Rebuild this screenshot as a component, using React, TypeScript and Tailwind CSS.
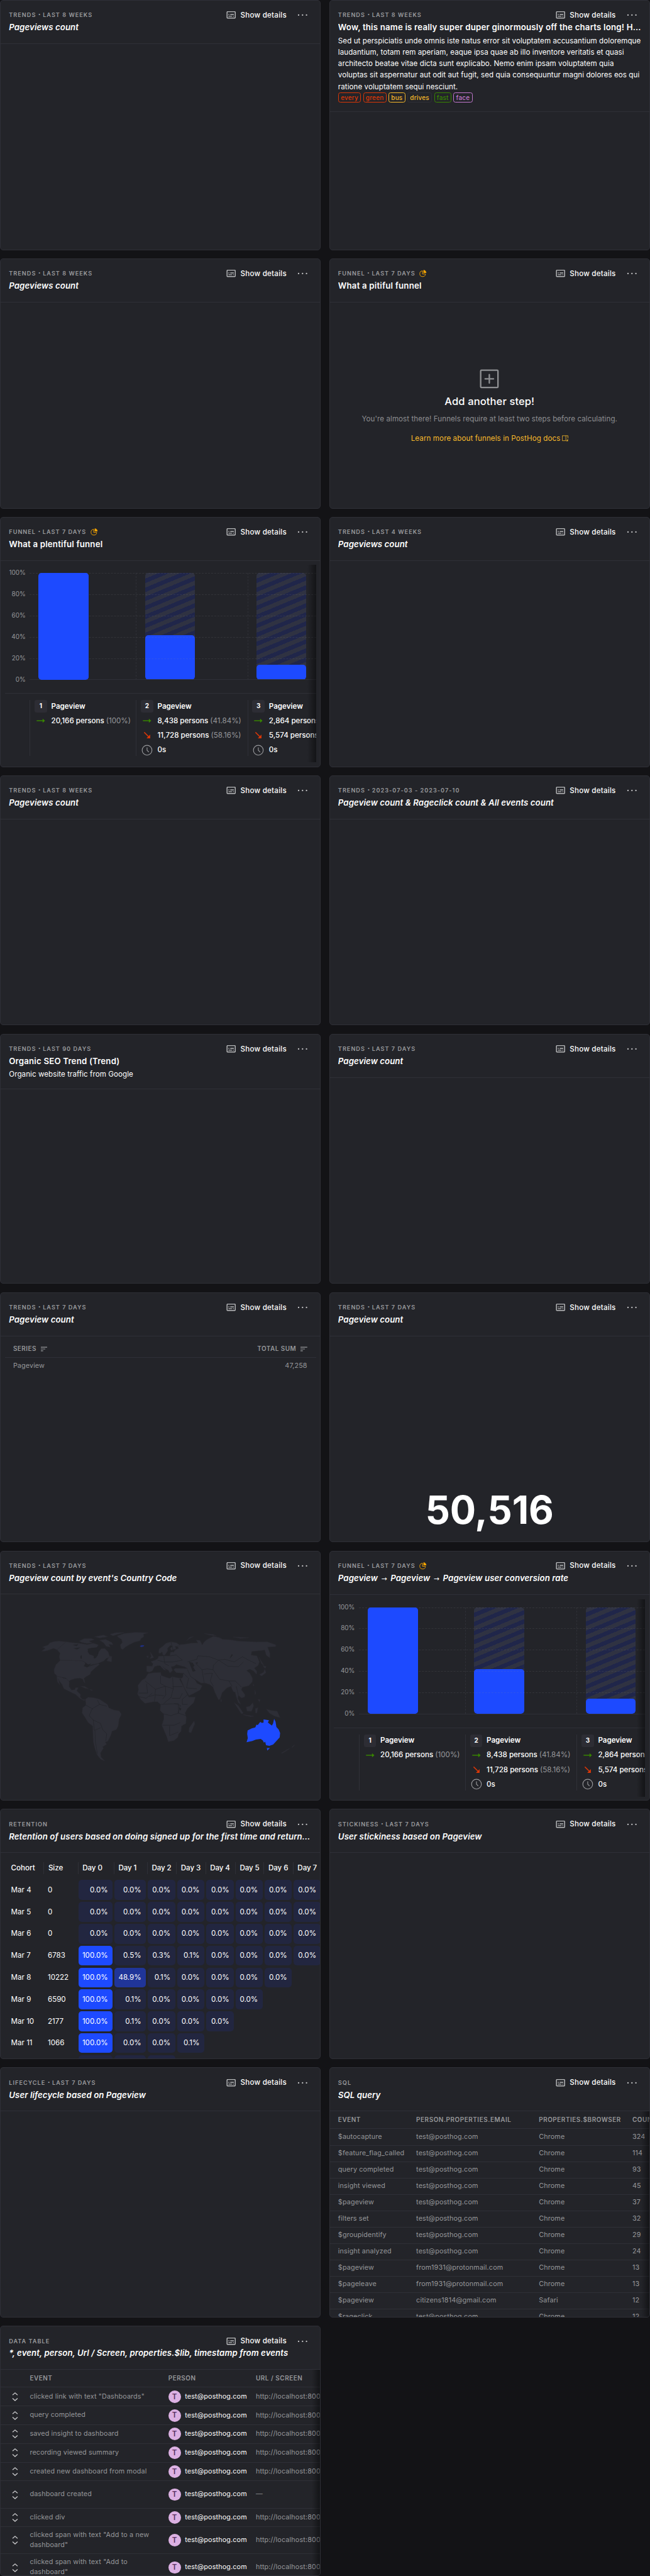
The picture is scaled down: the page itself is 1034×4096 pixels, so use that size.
import React from 'react'

type CardProps = {
  kind: string
  period?: string
  title: React.ReactNode
  italic?: boolean
  sampled?: boolean
  description?: string
  tags?: boolean
  children?: React.ReactNode
}

function DetailsIcon() {
  return (
    <svg className="size-[21px] shrink-0 text-[#b9babc]" viewBox="0 0 24 24" fill="currentColor">
      <path d="M20 4H4c-1.1 0-2 .9-2 2v12c0 1.1.9 2 2 2h16c1.1 0 2-.9 2-2V6c0-1.1-.9-2-2-2zm0 14H4V6h16v12zM6 10h2v2H6zm0 4h8v2H6zm10 0h2v2h-2zm-6-4h8v2h-8z" />
    </svg>
  )
}

function DotsIcon() {
  return (
    <svg className="h-6 w-5 shrink-0 text-[#c8c8ca]" viewBox="0 0 20 24" fill="currentColor">
      <circle cx="2.4" cy="12" r="1.4" />
      <circle cx="10" cy="12" r="1.4" />
      <circle cx="17.6" cy="12" r="1.4" />
    </svg>
  )
}

function PieIcon() {
  return (
    <svg className="size-3.5 shrink-0 text-[#f7a501]" viewBox="0 0 15 15" fill="none">
      <path d="M6.6 2.2A5.9 5.9 0 1 0 12.8 8.6H6.6Z" stroke="currentColor" strokeWidth="1.2" />
      <path d="M8.6 0.4a6 6 0 0 1 6 6h-6Z" fill="currentColor" />
    </svg>
  )
}

const TAGS: [string, string][] = [
  ['every', 'border-[#db3707] text-[#db3707]'],
  ['green', 'border-[#db3707] text-[#db3707]'],
  ['bus', 'border-[#f7b92b] text-[#f7b92b]'],
  ['drives', 'border-[#2f3037] text-[#f7b92b]'],
  ['fast', 'border-[#388600] text-[#388600]'],
  ['face', 'border-[#c278cf] text-[#c278cf]'],
]

function Card({ kind, period, title, italic = true, sampled, description, tags, children }: CardProps) {
  return (
    <section className="relative flex h-[480px] min-w-0 flex-col overflow-hidden rounded-md border border-[#2f3037] bg-[#232429]">
      <header className="shrink-0 border-b border-[#2f3037] px-4 pt-4 pb-4">
        <div className="flex h-6 items-center">
          <h5 className="flex items-center text-[11px] font-semibold tracking-[1.25px] whitespace-nowrap text-[#9a9b9e] uppercase">
            <span>{kind}</span>
            {period && <span className="w-[13px] text-center text-[8px] tracking-normal">•</span>}
            {period && <span>{period}</span>}
            {sampled && (
              <span className="ml-2">
                <PieIcon />
              </span>
            )}
          </h5>
          <div className="ml-auto flex items-center pr-2">
            <DetailsIcon />
            <span className="ml-[7px] w-[89px] text-sm font-medium tracking-[0.28px] whitespace-nowrap">Show details</span>
            <span className="ml-5">
              <DotsIcon />
            </span>
          </div>
        </div>
        <h4
          className={
            italic
              ? 'mb-0.5 truncate text-base leading-6 font-semibold tracking-[0.08px] italic'
              : 'mb-0.5 truncate text-base leading-6 font-semibold tracking-[0.22px]'
          }
        >
          {title}
        </h4>
        {description && <p className="text-sm leading-[22px] tracking-[0.08px]">{description}</p>}
        {tags && (
          <div className="flex gap-1">
            {TAGS.map(([name, tone]) => (
              <span key={name} className={`flex h-5 items-center rounded border px-1 text-xs font-medium tracking-[0.25px] ${tone}`}>
                {name}
              </span>
            ))}
          </div>
        )}
      </header>
      <div className="relative min-h-0 flex-1 overflow-hidden">{children}</div>
    </section>
  )
}

function EdgeShade() {
  return <div className="pointer-events-none absolute inset-y-0 right-0 w-4 bg-linear-to-r from-transparent to-black/45" />
}

function GreenArrow() {
  return (
    <svg className="h-6 w-6 shrink-0 text-[#388600]" viewBox="0 0 24 24">
      <path d="M4 12h12" stroke="currentColor" strokeWidth="1.8" />
      <path d="M15.5 8l4.5 4-4.5 4z" fill="currentColor" />
    </svg>
  )
}

function RedArrow() {
  return (
    <svg className="h-6 w-6 shrink-0 text-[#db3707]" viewBox="0 0 24 24">
      <path d="M6.5 6.5l9 9" stroke="currentColor" strokeWidth="1.8" />
      <path d="M18 11v7h-7z" fill="currentColor" />
    </svg>
  )
}

function ClockIcon() {
  return (
    <svg className="h-6 w-6 shrink-0 text-[#97989b]" viewBox="0 0 24 24" fill="none" stroke="currentColor" strokeWidth="1.4">
      <circle cx="12" cy="12" r="9.4" />
      <path d="M12 6.5V12l3.4 3.6" />
    </svg>
  )
}

const STEPS = [
  { n: '1', fill: 100, width: 'w-[204px]', pass: '20,166', passPct: '(100%)' },
  { n: '2', fill: 41.84, width: 'w-[214px]', pass: '8,438', passPct: '(41.84%)', drop: '11,728', dropPct: '(58.16%)' },
  { n: '3', fill: 14.2, width: 'w-[214px]', pass: '2,864', passPct: '(14.2%)', drop: '5,574', dropPct: '(27.64%)' },
]

function Funnel() {
  return (
    <div className="relative m-2 h-[379px] overflow-hidden">
      <div className="flex h-[247px] border-b border-[#2f3037] pt-[15px]">
        <div className="flex h-[205px] w-12 shrink-0 flex-col justify-between pr-2 text-right text-xs leading-none text-[#97989b]">
          {['100%', '80%', '60%', '40%', '20%', '0%'].map((t) => (
            <span key={t} className="flex h-0 items-center justify-end">
              {t}
            </span>
          ))}
        </div>
        <div className="relative h-[206px] w-[640px] shrink-0">
          <div className="flex h-[205px]">
            {STEPS.map((s, i) => (
              <div key={s.n} className={`${s.width} shrink-0 ${i > 0 ? 'border-l border-dashed border-[#2f3037]' : 'border-l border-transparent'} pl-4`}>
                <div className="flex h-full w-24 flex-col justify-end overflow-hidden rounded-md bg-[repeating-linear-gradient(-22.5deg,#20264a_0_8px,#2f3242_8px_16px)]">
                  <div className="rounded-md bg-[#1d4aff]" style={{ height: `${s.fill}%` }} />
                </div>
              </div>
            ))}
          </div>
          <div className="pointer-events-none absolute inset-0 flex flex-col justify-between">
            {[0, 1, 2, 3, 4].map((i) => (
              <div key={i} className="border-t border-dashed border-[#8a8c94]/15" />
            ))}
            <div className="border-t border-[#2f3037]" />
          </div>
          <div className="absolute top-0 left-[17px] h-[205px] w-24 rounded-md bg-[#1d4aff]" />
        </div>
      </div>
      <div className="mt-3 ml-12 flex h-[108px]">
        {STEPS.map((s) => (
          <div key={s.n} className={`${s.width} flex shrink-0 flex-col gap-1 border-l border-[#2f3037] pl-2 text-sm whitespace-nowrap`}>
            <div className="flex h-6 items-center gap-2">
              <span className="flex size-6 items-center justify-center rounded bg-[#2d2d34] text-xs font-bold">{s.n}</span>
              <span className="font-semibold">Pageview</span>
            </div>
            <div className="flex h-6 items-center gap-2">
              <GreenArrow />
              <span className="font-medium">
                {s.pass} persons <span className="font-normal text-[#97989b]">{s.passPct}</span>
              </span>
            </div>
            {s.drop && (
              <>
                <div className="flex h-6 items-center gap-2">
                  <RedArrow />
                  <span className="font-medium">
                    {s.drop} persons <span className="font-normal text-[#97989b]">{s.dropPct}</span>
                  </span>
                </div>
                <div className="flex h-6 items-center gap-2">
                  <ClockIcon />
                  <span className="font-medium">0s</span>
                </div>
              </>
            )}
          </div>
        ))}
      </div>
      <EdgeShade />
    </div>
  )
}

function AddStep() {
  return (
    <div className="flex flex-col items-center pt-[126px]">
      <svg className="h-[42px] w-[42px] text-[#8f9093]" viewBox="0 0 42 42" fill="none" stroke="currentColor" strokeWidth="2.8">
        <rect x="4.4" y="4.4" width="33.2" height="33.2" rx="1.5" />
        <path d="M21 13v16M13 21h16" strokeLinecap="round" />
      </svg>
      <h2 className="mt-[9px] text-xl leading-7 font-medium tracking-[0.1px]">Add another step!</h2>
      <p className="mt-2 text-sm leading-[22px] tracking-[0.08px] text-[#8c8d90]">
        You're almost there! Funnels require at least two steps before calculating.
      </p>
      <p className="mt-[15px] flex items-center text-sm leading-[22px] tracking-[0.12px] text-[#f7b92b]">
        Learn more about funnels in PostHog docs
        <svg className="ml-[3px] size-3" viewBox="0 0 12 12" fill="none" stroke="currentColor">
          <path d="M7.5 10.5H0.5V1h11v5M7.5 1v9.5" />
          <path d="M11.5 7v4.5H8z" fill="currentColor" stroke="none" />
        </svg>
      </p>
    </div>
  )
}

function SortIcon() {
  return (
    <svg className="h-3 w-[13px]" viewBox="0 0 13 12" stroke="currentColor" strokeWidth="1.4">
      <path d="M0 2.5h13M0 6h8.5M0 9.5h4.5" />
    </svg>
  )
}

function SeriesTable() {
  return (
    <div className="m-2 text-[13px] text-[#97989b]">
      <div className="flex h-[34px] items-center justify-between border-b border-[#2f3037] pr-[17px] pl-4 text-xs font-semibold tracking-[0.6px]">
        <span className="flex items-center gap-2">
          SERIES <SortIcon />
        </span>
        <span className="flex items-center gap-2">
          TOTAL SUM <SortIcon />
        </span>
      </div>
      <div className="flex h-[31px] items-center justify-between pr-[17px] pl-4 tracking-[0.15px]">
        <span>Pageview</span>
        <span>47,258</span>
      </div>
    </div>
  )
}

const RET_COLS = 'grid grid-cols-[65.5px_65.5px_69px_64px_56px_56px_57px_55px_56px_56px]'
const RET_ROWS: [string, string, string[]][] = [
  ['Mar 4', '0', ['0.0%', '0.0%', '0.0%', '0.0%', '0.0%', '0.0%', '0.0%', '0.0%']],
  ['Mar 5', '0', ['0.0%', '0.0%', '0.0%', '0.0%', '0.0%', '0.0%', '0.0%', '0.0%']],
  ['Mar 6', '0', ['0.0%', '0.0%', '0.0%', '0.0%', '0.0%', '0.0%', '0.0%', '0.0%']],
  ['Mar 7', '6783', ['100.0%', '0.5%', '0.3%', '0.1%', '0.0%', '0.0%', '0.0%', '0.0%']],
  ['Mar 8', '10222', ['100.0%', '48.9%', '0.1%', '0.0%', '0.0%', '0.0%', '0.0%']],
  ['Mar 9', '6590', ['100.0%', '0.1%', '0.0%', '0.0%', '0.0%', '0.0%']],
  ['Mar 10', '2177', ['100.0%', '0.1%', '0.0%', '0.0%', '0.0%']],
  ['Mar 11', '1066', ['100.0%', '0.0%', '0.0%', '0.1%']],
  ['', '', ['', '', '']],
]

function cellTone(v: string) {
  if (v === '100.0%') return 'bg-[#1d4aff]'
  if (v === '48.9%') return 'bg-[#203599]'
  return 'bg-[#222640]'
}

function Retention() {
  return (
    <div className="w-[620px] pl-[17px] text-sm">
      <div className={`${RET_COLS} mt-[18px] mb-2.5 h-[22px]`}>
        {['Cohort', 'Size', 'Day 0', 'Day 1', 'Day 2', 'Day 3', 'Day 4', 'Day 5', 'Day 6', 'Day 7'].map((h, i) => (
          <span
            key={h}
            className={
              i === 0 ? 'pl-[3px] leading-[22px] font-medium' : 'border-l border-[#2f3037] pl-2 leading-[22px] font-medium tracking-[-0.1px] whitespace-nowrap'
            }
          >
            {h}
          </span>
        ))}
      </div>
      {RET_ROWS.map(([day, size, cells], r) => (
        <div key={r} className={`${RET_COLS} h-[42px] items-center`}>
          <span className="pl-[3px]">{day}</span>
          <span className="pl-2">{size}</span>
          {cells.map((c, i) => (
            <span key={i} className={`${cellTone(c)} mx-0.5 flex h-[38px] items-center justify-end rounded-md pr-[9px]`}>
              {c}
            </span>
          ))}
        </div>
      ))}
    </div>
  )
}

const SQL_ROWS: [string, string, string, string][] = [
  ['$autocapture', 'test@posthog.com', 'Chrome', '324'],
  ['$feature_flag_called', 'test@posthog.com', 'Chrome', '114'],
  ['query completed', 'test@posthog.com', 'Chrome', '93'],
  ['insight viewed', 'test@posthog.com', 'Chrome', '45'],
  ['$pageview', 'test@posthog.com', 'Chrome', '37'],
  ['filters set', 'test@posthog.com', 'Chrome', '32'],
  ['$groupidentify', 'test@posthog.com', 'Chrome', '29'],
  ['insight analyzed', 'test@posthog.com', 'Chrome', '24'],
  ['$pageview', 'from1931@protonmail.com', 'Chrome', '13'],
  ['$pageleave', 'from1931@protonmail.com', 'Chrome', '13'],
  ['$pageview', 'citizens1814@gmail.com', 'Safari', '12'],
  ['$rageclick', 'test@posthog.com', 'Chrome', '12'],
]

function SqlTable() {
  const cols = 'grid grid-cols-[150px_235.5px_179.5px_100px] items-center pl-4 border-b border-[#2f3037]'
  return (
    <div className="h-full w-full overflow-hidden">
      <div className="w-[690px] text-[13px] tracking-[0.18px] text-[#97989b]">
        <div className={`${cols} h-[34px] text-xs font-semibold tracking-[0.65px]`}>
          <span>EVENT</span>
          <span>PERSON.PROPERTIES.EMAIL</span>
          <span>PROPERTIES.$BROWSER</span>
          <span>COUNT()</span>
        </div>
        {SQL_ROWS.map((r, i) => (
          <div key={i} className={`${cols} h-[31.45px]`}>
            {r.map((c, j) => (
              <span key={j}>{c}</span>
            ))}
          </div>
        ))}
      </div>
      <EdgeShade />
    </div>
  )
}

const EVENTS: [string, string, string][] = [
  ['clicked link with text "Dashboards"', 'http://localhost:8000/', 'h-9'],
  ['query completed', 'http://localhost:8000/', 'h-9'],
  ['saved insight to dashboard', 'http://localhost:8000/', 'h-9'],
  ['recording viewed summary', 'http://localhost:8000/', 'h-9'],
  ['created new dashboard from modal', 'http://localhost:8000/', 'h-9'],
  ['dashboard created', '—', 'h-[52px]'],
  ['clicked div', 'http://localhost:8000/', 'h-9'],
  ['clicked span with text "Add to a new dashboard"', 'http://localhost:8000/', 'h-[52px]'],
  ['clicked span with text "Add to dashboard"', 'http://localhost:8000/', 'h-[52px]'],
]

function DataTable() {
  const cols = 'grid grid-cols-[56px_266px_168px_200px] items-center border-b border-[#2f3037]'
  return (
    <div className="h-full w-full overflow-hidden">
      <div className="w-[690px] text-[13px] tracking-[0.18px] text-[#97989b]">
        <div className={`${cols} h-[34px] text-xs font-semibold tracking-[0.65px]`}>
          <span />
          <span>EVENT</span>
          <span>PERSON</span>
          <span>URL / SCREEN</span>
        </div>
        {EVENTS.map(([event, url, h], i) => (
          <div key={i} className={`${cols} ${h}`}>
            <svg className="ml-4 size-6 text-[#c8c8ca]" viewBox="0 0 24 24" fill="none" stroke="currentColor" strokeWidth="1.6">
              <path d="M7.2 8.8L12 4.6l4.8 4.2M7.2 15.2l4.8 4.2 4.8-4.2" />
            </svg>
            <span className="w-[240px] leading-5">{event}</span>
            <span className="flex items-center gap-2 text-white">
              <span className="flex size-6 items-center justify-center rounded-full bg-[#dcb1e3] text-sm font-semibold text-[#572e5e]">T</span>
              test@posthog.com
            </span>
            <span>{url}</span>
          </div>
        ))}
      </div>
      <EdgeShade />
    </div>
  )
}

const LAND = [
  'M565 540L600 526L655 519L715 522L692 530L694 545L680 556L676 568L650 576L625 590L605 605L592 619L583 612L580 592L590 578L586 560L570 548Z',
  'M200 628L218 612L204 605L232 592L240 580L262 572L285 570L318 574L275 620L258 612L235 622L215 628Z',
  'M318 574L350 579L385 583L420 590L450 582L475 592L468 605L440 612L422 630L430 642L455 652L455 670L470 655L475 635L488 614L505 612L522 632L528 655L537 662L512 670L500 685L470 700L445 705L430 712L415 695L395 683L290 682L285 660L290 640L275 620Z',
  'M290 682L395 683L412 695L405 715L420 720L450 708L475 700L480 705L462 722L450 735L438 748L435 762L415 775L405 785L410 812L404 806L400 790L385 783L360 787L340 795L332 802L318 785L300 780L275 772L262 755L260 735L270 705Z',
  'M273 772L300 780L318 785L334 803L333 832L345 852L360 850L365 838L378 838L370 857L388 877L387 892L397 906L412 908L405 914L385 900L365 878L325 855L308 845L300 822L288 803L281 788L288 822L277 805Z',
  'M382 570L405 556L440 555L455 562L430 570L445 580L420 584L395 578ZM455 545L500 535L520 545L480 552ZM480 565L510 560L540 578L545 592L525 588L532 605L512 600L500 580ZM530 530L560 521L600 520L570 530L545 540Z',
  'M388 830L408 830L428 846L412 842ZM432 848L448 852L440 856ZM528 655L540 658L538 690L515 684Z',
  'M412 905L425 894L450 896L480 905L505 925L518 935L525 955L550 967L575 972L586 992L575 1020L570 1060L562 1080L540 1090L535 1112L520 1148L508 1152L514 1165L495 1180L499 1188L485 1215L487 1238L506 1262L485 1252L468 1225L458 1190L450 1150L447 1060L425 1040L410 1010L396 985L398 955L414 940Z',
  'M715 757L740 752L775 750L778 768L800 778L820 785L830 775L860 782L875 783L866 790L885 830L905 880L912 893L943 893L935 925L905 958L893 985L899 1010L897 1045L876 1060L874 1090L862 1105L858 1125L840 1143L812 1150L804 1120L795 1095L781 1055L790 1020L790 990L772 970L775 935L760 920L740 920L700 929L680 908L663 875L668 850L665 825L685 795L700 785Z',
  'M937 1030L940 1047L922 1099L911 1095L913 1070L925 1050Z',
  'M765 637L768 615L785 600L800 583L825 574L852 580L870 595L862 603L845 600L850 615L826 624L822 612L832 600L822 595L808 612L810 625L795 652L786 650L782 632L772 642Z',
  'M707 713L735 714L738 700L728 688L748 680L762 670L765 657L785 655L820 655L822 635L838 632L848 618L862 612L855 600L870 590L890 588L920 582L955 580L947 564L965 566L976 592L985 575L1000 560L1030 542L1060 550L1075 560L1110 562L1150 570L1190 572L1240 575L1290 574L1332 592L1330 602L1292 605L1303 640L1302 666L1285 652L1278 622L1255 625L1215 630L1212 650L1240 655L1252 690L1245 712L1228 725L1240 745L1238 762L1224 742L1205 732L1190 740L1206 755L1219 785L1218 805L1200 828L1170 836L1165 850L1183 880L1180 893L1165 898L1150 882L1148 900L1162 935L1150 925L1140 890L1135 865L1125 860L1115 830L1095 840L1072 868L1062 905L1054 908L1035 860L1028 835L1012 820L990 812L970 812L940 790L950 812L976 828L965 852L935 872L912 885L890 840L872 788L882 778L885 755L850 752L838 735L845 727L905 728L890 718L870 712L850 704L842 714L826 718L833 740L820 754L812 738L795 728L785 716L802 740L790 735L772 712L760 712L745 718L735 742L720 750L707 745Z',
  'M724 632L732 645L742 665L722 672L730 658ZM706 656L716 655L714 668ZM1250 662L1258 680L1275 712L1262 700ZM1268 712L1285 716L1280 728ZM1278 732L1284 752L1262 772L1252 762L1272 750Z',
  'M1230 850L1235 870L1230 882ZM1245 905L1256 908L1252 922ZM1188 950L1206 945L1220 925L1224 945L1214 975L1192 974ZM1130 925L1150 942L1175 985L1165 990ZM1172 993L1225 1003L1210 1006L1180 998ZM1232 958L1245 955L1240 985L1233 985ZM1285 962L1310 970L1338 974L1352 1012L1325 1003L1300 985Z',
  'M1067 903L1071 918L1064 918ZM1222 815L1227 825L1222 830ZM1424 1168L1408 1187L1412 1175ZM1399 1190L1362 1218L1358 1215L1390 1192ZM900 568L915 548L935 543L915 555ZM985 526L1030 532L1045 540L1010 535ZM1125 546L1200 550L1160 555Z',
]

const BORDERS =
  'M700 800L750 848L798 830L775 815L775 770M833 780L836 845L798 830M833 832L880 832M707 815L712 870L668 870M750 848L748 880L720 890M798 830L800 880L785 905M836 845L825 895L790 930M880 870L868 900L830 900M905 880L880 905L880 935L905 935M778 935L860 930L862 985L825 1000L790 990M785 1055L840 1055L870 1040M818 1060L818 1115L860 1095M840 930L870 940L860 985L898 1000M670 890L705 900L735 870M745 918L750 880L790 885M415 940L445 960L430 1000L450 1025L485 1045L495 1080L515 1105L510 1145M445 960L480 935L515 945M458 1085L460 1150L470 1220M470 910L480 935M450 1025L455 1085L485 1070M905 690L950 675L955 655L1010 660L1055 680L1085 675L1130 690L1170 660L1200 680L1235 700M1055 680L1100 715L1150 718L1175 690M1055 680L1030 710L1028 735L1060 790L1105 800L1120 830M945 700L975 735L1000 730L1028 735M975 735L985 810M985 760L1025 755L1015 800L1030 830M760 680L790 690L835 690L880 680L850 650L822 655M790 655L795 700L815 712M825 575L838 635M905 735L920 775L945 795M885 755L910 785L900 840L950 845M1105 800L1135 800L1165 835M1140 830L1150 880M318 785L300 780'

function WorldMap() {
  return (
    <svg className="block h-full w-full" viewBox="2.5 300 1543 1185" preserveAspectRatio="none">
      <path d={LAND.join('')} fill="#2d2e36" stroke="#2a2a31" strokeWidth="2" strokeLinejoin="round" />
      <path d="M422 615L445 608L468 612L474 640L462 668L452 668L452 655L430 645ZM350 592L378 588L370 598ZM355 612L388 606L372 618ZM405 712L440 700L420 722ZM912 690L930 695L938 712L932 720L944 742L930 746L920 715ZM942 695L955 692L952 702ZM388 655L394 652L394 672L388 670ZM862 955L875 958L870 972ZM1118 645L1124 650L1108 672Z" fill="#232429" />
      <path d={BORDERS} fill="none" stroke="#232429" strokeWidth="2.4" />
      <path d="M674 599L684 593L696 595L694 600L682 605Z" fill="#202f7d" />
      <path
        d="M1195 1085L1215 1073L1232 1068L1238 1052L1244 1054L1256 1036L1264 1042L1272 1040L1272 1022L1298 1026L1293 1040L1312 1057L1318 1045L1323 1018L1330 1035L1334 1065L1345 1080L1352 1100L1350 1125L1335 1145L1318 1167L1300 1174L1284 1170L1280 1150L1274 1156L1268 1142L1258 1134L1235 1138L1218 1146L1190 1153L1196 1130L1193 1105ZM1288 1187L1303 1187L1290 1201Z"
        fill="#1d4aff"
      />
    </svg>
  )
}

function TitleArrow() {
  return <span className="inline-block w-[24.6px] text-center font-['DejaVu_Sans',sans-serif] text-[13px] font-normal tracking-normal not-italic">→</span>
}

const LOREM =
  'Sed ut perspiciatis unde omnis iste natus error sit voluptatem accusantium doloremque laudantium, totam rem aperiam, eaque ipsa quae ab illo inventore veritatis et quasi architecto beatae vitae dicta sunt explicabo. Nemo enim ipsam voluptatem quia voluptas sit aspernatur aut odit aut fugit, sed quia consequuntur magni dolores eos qui ratione voluptatem sequi nesciunt.'

export default function App() {
  return (
    <div className="h-[4096px] w-full overflow-hidden bg-[#131316] font-['Inter',sans-serif] text-white">
      <main className="grid w-[1248px] grid-cols-2 gap-4 [zoom:0.8285]">
        <Card kind="Trends" period="Last 8 weeks" title="Pageviews count" />
        <Card
          kind="Trends"
          period="Last 8 weeks"
          title="Wow, this name is really super duper ginormously off the charts long! How is this even possible?"
          italic={false}
          description={LOREM}
          tags
        />
        <Card kind="Trends" period="Last 8 weeks" title="Pageviews count" />
        <Card kind="Funnel" period="Last 7 days" sampled italic={false} title="What a pitiful funnel">
          <AddStep />
        </Card>
        <Card kind="Funnel" period="Last 7 days" sampled italic={false} title="What a plentiful funnel">
          <Funnel />
        </Card>
        <Card kind="Trends" period="Last 4 weeks" title="Pageviews count" />
        <Card kind="Trends" period="Last 8 weeks" title="Pageviews count" />
        <Card kind="Trends" period="2023-07-03 - 2023-07-10" title="Pageview count & Rageclick count & All events count" />
        <Card kind="Trends" period="Last 90 days" italic={false} title="Organic SEO Trend (Trend)" description="Organic website traffic from Google" />
        <Card kind="Trends" period="Last 7 days" title="Pageview count" />
        <Card kind="Trends" period="Last 7 days" title="Pageview count">
          <SeriesTable />
        </Card>
        <Card kind="Trends" period="Last 7 days" title="Pageview count">
          <div className="flex h-full items-end justify-center pb-[23px] text-[74px] leading-none font-bold">50,516</div>
        </Card>
        <Card kind="Trends" period="Last 7 days" title="Pageview count by event's Country Code">
          <WorldMap />
        </Card>
        <Card
          kind="Funnel"
          period="Last 7 days"
          sampled
          title={
            <>
              Pageview
              <TitleArrow />
              Pageview
              <TitleArrow />
              Pageview user conversion rate
            </>
          }
        >
          <Funnel />
        </Card>
        <Card kind="Retention" title="Retention of users based on doing signed up for the first time and returning with the same event">
          <Retention />
        </Card>
        <Card kind="Stickiness" period="Last 7 days" title="User stickiness based on Pageview" />
        <Card kind="Lifecycle" period="Last 7 days" title="User lifecycle based on Pageview" />
        <Card kind="SQL" title="SQL query">
          <SqlTable />
        </Card>
        <Card kind="Data table" title="*, event, person, Url / Screen, properties.$lib, timestamp from events">
          <DataTable />
        </Card>
      </main>
    </div>
  )
}
